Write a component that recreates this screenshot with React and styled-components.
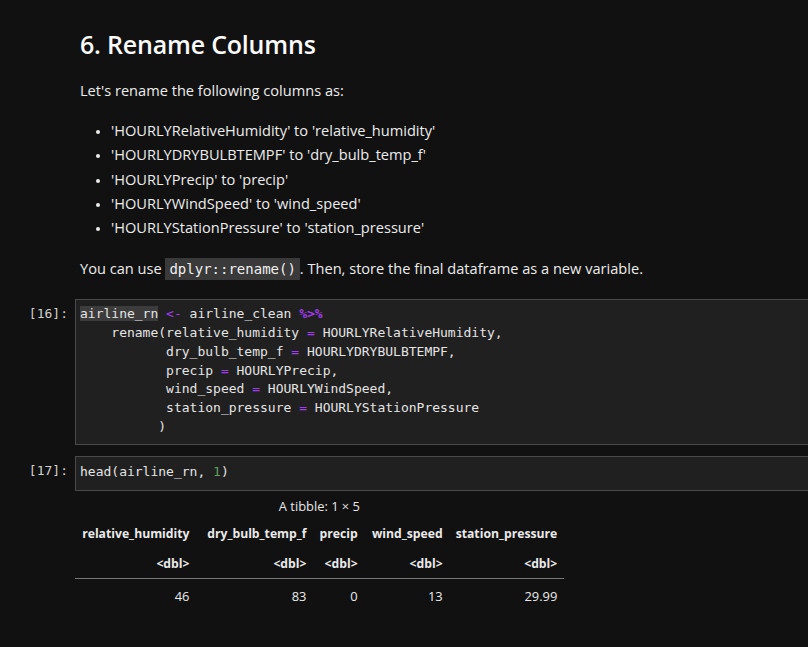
import styled, { createGlobalStyle } from "styled-components";

const Global = createGlobalStyle`
  html, body {
    margin: 0;
    background: #111111;
  }
  body {
    font-family: "Open Sans", "Liberation Sans", sans-serif;
    color: #e8e8e8;
  }
`;

const Notebook = styled.div`
  padding: 24px 0 0 0;
  width: 808px;
  overflow: hidden;
`;

const Markdown = styled.div`
  padding-left: 80px;
  font-size: 14.6px;
  line-height: 24px;
  color: #ececec;
`;

const Title = styled.h2`
  margin: 0 0 14px;
  font-size: 25px;
  font-weight: 600;
  line-height: 40px;
  color: #fafafa;
  letter-spacing: -0.2px;
`;

const Para = styled.p`
  margin: 0;
`;

const List = styled.ul`
  margin: 16px 0 17px;
  padding-left: 31px;
  li {
    line-height: 24.3px;
  }
  li::marker {
    font-size: 12px;
  }
`;

const InlineCode = styled.code`
  font-family: "DejaVu Sans Mono", "Liberation Mono", monospace;
  font-size: 14px;
  background: #3a3a3a;
  padding: 3px 4px;
  color: #f0f0f0;
`;

const Cell = styled.div`
  display: flex;
  align-items: flex-start;
  margin-top: ${(p) => p.$top || 0}px;
`;

const Prompt = styled.div`
  width: 68px;
  flex: none;
  padding-right: 7px;
  text-align: right;
  font-family: "DejaVu Sans Mono", "Liberation Mono", monospace;
  font-size: 13px;
  line-height: 18.7px;
  padding-top: 6px;
  color: #d0d0d0;
`;

const CodeBox = styled.pre`
  flex: 1;
  margin: 0;
  background: #202020;
  border: 1px solid #4a4a4a;
  border-right: none;
  padding: ${(p) => p.$pad || "5px 0 8px 4px"};
  font-family: "DejaVu Sans Mono", "Liberation Mono", monospace;
  font-size: 13px;
  line-height: 18.7px;
  color: #e4e4e4;
`;

const Sel = styled.span`
  background: #3c3c3c;
`;

const Op = styled.span`
  color: #a23cf0;
  font-weight: ${(p) => (p.$bold ? 700 : 400)};
`;

const Num = styled.span`
  color: #5fa05f;
`;

const Output = styled.div`
  padding-left: 75px;
  padding-top: 6px;
`;

const Table = styled.table`
  border-collapse: collapse;
  font-family: "Open Sans", "Liberation Sans", sans-serif;
  font-size: 12.9px;
  color: #eaeaea;
  caption {
    line-height: 18px;
    padding-bottom: 3px;
    color: #e6e6e6;
  }
  th {
    font-size: 12.2px;
    font-weight: 700;
    text-align: right;
    padding: 0 6.5px;
    height: 30px;
  }
  thead tr:last-child th {
    border-bottom: 1px solid #777;
  }
  td {
    text-align: right;
    padding: 0 6.5px;
    height: 34px;
  }
`;

const HeadCell = styled.th`
  min-width: ${(p) => p.$w}px;
`;

const columns = [
  { name: "relative_humidity", w: 108, value: "46" },
  { name: "dry_bulb_temp_f", w: 104, value: "83" },
  { name: "precip", w: 38, value: "0" },
  { name: "wind_speed", w: 72, value: "13" },
  { name: "station_pressure", w: 101, value: "29.99" },
];

export default function App() {
  return (
    <Notebook>
      <Global />
      <Markdown>
        <Title>6. Rename Columns</Title>
        <Para>Let's rename the following columns as:</Para>
        <List>
          <li>'HOURLYRelativeHumidity' to 'relative_humidity'</li>
          <li>'HOURLYDRYBULBTEMPF' to 'dry_bulb_temp_f'</li>
          <li>'HOURLYPrecip' to 'precip'</li>
          <li>'HOURLYWindSpeed' to 'wind_speed'</li>
          <li>'HOURLYStationPressure' to 'station_pressure'</li>
        </List>
        <Para>
          You can use <InlineCode>dplyr::rename()</InlineCode>. Then, store the final dataframe as a new variable.
        </Para>
      </Markdown>

      <Cell $top={18}>
        <Prompt>[16]:</Prompt>
        <CodeBox>
          <Sel>airline_rn</Sel> <Op>&lt;-</Op> airline_clean <Op $bold>%&gt;%</Op>
          {"\n    rename(relative_humidity "}<Op>=</Op>{" HOURLYRelativeHumidity,"}
          {"\n           dry_bulb_temp_f "}<Op>=</Op>{" HOURLYDRYBULBTEMPF,"}
          {"\n           precip "}<Op>=</Op>{" HOURLYPrecip,"}
          {"\n           wind_speed "}<Op>=</Op>{" HOURLYWindSpeed,"}
          {"\n           station_pressure "}<Op>=</Op>{" HOURLYStationPressure"}
          {"\n          )"}
        </CodeBox>
      </Cell>

      <Cell $top={11}>
        <Prompt>[17]:</Prompt>
        <CodeBox $pad="6px 0 8px 4px">
          head(airline_rn, <Num>1</Num>)
        </CodeBox>
      </Cell>

      <Output>
        <Table>
          <caption>A tibble: 1 × 5</caption>
          <thead>
            <tr>
              {columns.map((c) => (
                <HeadCell key={c.name} $w={c.w}>{c.name}</HeadCell>
              ))}
            </tr>
            <tr>
              {columns.map((c) => (
                <th key={c.name}>&lt;dbl&gt;</th>
              ))}
            </tr>
          </thead>
          <tbody>
            <tr>
              {columns.map((c) => (
                <td key={c.name}>{c.value}</td>
              ))}
            </tr>
          </tbody>
        </Table>
      </Output>
    </Notebook>
  );
}
